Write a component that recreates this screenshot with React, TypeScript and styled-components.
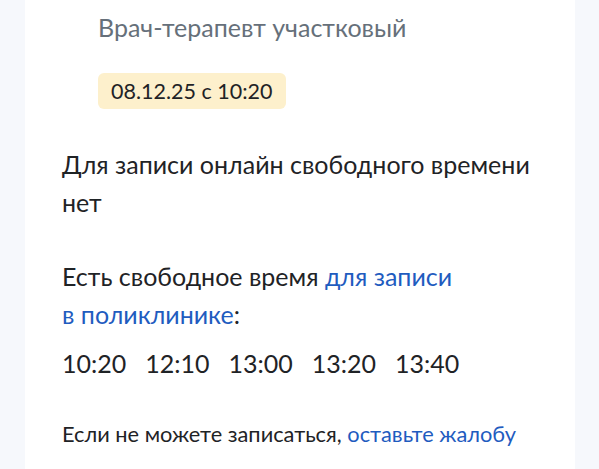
import React from "react";
import styled, { createGlobalStyle } from "styled-components";

const GlobalStyle = createGlobalStyle`
  html, body {
    margin: 0;
    padding: 0;
    background: #f6f8fc;
    font-family: Lato, "Noto Sans", sans-serif;
    color: #1f2326;
  }
`;

const Page = styled.main`
  padding: 0 24px 0 25px;
  height: 469px;
  overflow: hidden;
`;

const Card = styled.section`
  background: #ffffff;
  height: 100%;
  padding: 9px 37px 0 37px;
  box-sizing: border-box;
`;

const Doctor = styled.div`
  padding-left: 36px;
`;

const Speciality = styled.div`
  font-size: 25px;
  line-height: 36px;
  color: #66707a;
`;

const Badge = styled.span`
  display: inline-block;
  margin-top: 28px;
  padding: 4px 13px;
  background: #fdf0cc;
  border-radius: 6px;
  font-size: 21.5px;
  line-height: 28px;
  color: #1f2326;
`;

const Text = styled.p<{ $size?: number }>`
  margin: 0;
  font-size: ${(p) => p.$size ?? 25}px;
  line-height: 38px;
`;

const Link = styled.a`
  color: #1f5cbf;
  text-decoration: none;
`;

const Times = styled.div`
  display: flex;
  gap: 19px;
  margin-top: 10px;
  font-size: 25px;
  line-height: 40px;
`;

const Block = styled.div<{ $top: number }>`
  margin-top: ${(p) => p.$top}px;
`;

const times = ["10:20", "12:10", "13:00", "13:20", "13:40"];

export default function App() {
  return (
    <>
      <GlobalStyle />
      <Page>
        <Card>
          <Doctor>
            <Speciality>Врач-терапевт участковый</Speciality>
            <Badge>08.12.25 с 10:20</Badge>
          </Doctor>
          <Block $top={36}>
            <Text>
              Для записи онлайн свободного времени
              <br />
              нет
            </Text>
          </Block>
          <Block $top={36}>
            <Text>
              Есть свободное время <Link href="#">для записи</Link>
              <br />
              <Link href="#">в поликлинике</Link>:
            </Text>
            <Times>
              {times.map((t) => (
                <span key={t}>{t}</span>
              ))}
            </Times>
          </Block>
          <Block $top={32}>
            <Text $size={21.8}>
              Если не можете записаться, <Link href="#">оставьте жалобу</Link>
            </Text>
          </Block>
        </Card>
      </Page>
    </>
  );
}
